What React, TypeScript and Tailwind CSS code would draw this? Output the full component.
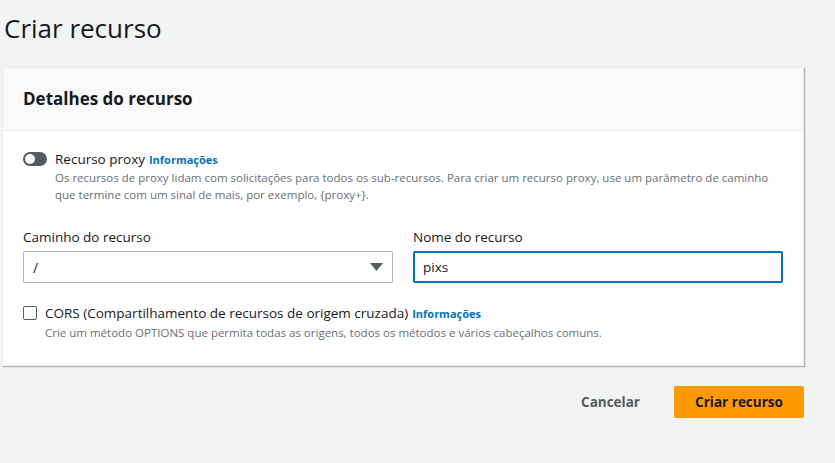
import { useState } from "react";

function Info() {
  return <span className="ml-1 text-[11px] font-bold text-[#0073bb]">Informações</span>;
}

export default function App() {
  const [proxy, setProxy] = useState(false);
  const [cors, setCors] = useState(false);
  const [name, setName] = useState("pixs");

  return (
    <div className="min-h-[463px] w-[835px] bg-[#f2f3f3] font-['Open_Sans',sans-serif] text-[#16191f]">
      <h1 className="pl-1 pt-[9px] text-[26px] leading-[38px] text-[#16191f]">Criar recurso</h1>

      <div className="ml-[2px] mt-[20px] w-[802px] border border-[#eaeded] bg-white shadow-[1px_1px_1px_0_rgba(0,28,36,0.3)]">
        <div className="flex h-[63px] items-center border-b border-[#eaeded] bg-[#fafafa] px-5">
          <h2 className="text-[17px] font-bold">Detalhes do recurso</h2>
        </div>

        <div className="px-5 pb-6 pt-5">
          <div className="flex gap-2">
            <button
              type="button"
              onClick={() => setProxy((v) => !v)}
              className={`mt-[1px] flex h-[14px] w-6 shrink-0 items-center rounded-full px-[2px] ${proxy ? "justify-end bg-[#0073bb]" : "bg-[#545b64]"}`}
            >
              <span className="h-[10px] w-[10px] rounded-full bg-white" />
            </button>
            <div>
              <div className="text-[13.5px] leading-[16px]">
                Recurso proxy
                <Info />
              </div>
              <p className="mt-[1px] text-[11.5px] leading-[17px] text-[#687078]">
                Os recursos de proxy lidam com solicitações para todos os sub-recursos. Para criar um recurso proxy, use um parâmetro de caminho
                <br />
                que termine com um sinal de mais, por exemplo, {"{proxy+}"}.
              </p>
            </div>
          </div>

          <div className="mt-[24px] grid grid-cols-2 gap-5">
            <div>
              <label className="block text-[13.5px] leading-[20px]">Caminho do recurso</label>
              <div className="mt-[4px] flex h-[32px] items-center justify-between rounded-[2px] border border-[#aab7b8] pl-[9px] pr-[9px] text-[14px]">
                <span>/</span>
                <svg width="13" height="8" viewBox="0 0 13 8">
                  <path d="M0 0h13L6.5 8z" fill="#545b64" />
                </svg>
              </div>
            </div>
            <div>
              <label className="block text-[13.5px] leading-[20px]">Nome do recurso</label>
              <input
                value={name}
                onChange={(e) => setName(e.target.value)}
                className="mt-[4px] h-[32px] w-full rounded-[2px] border-2 border-[#0073bb] px-[8px] text-[13.5px] outline-none"
              />
            </div>
          </div>

          <div className="mt-[22px] flex gap-2">
            <button
              type="button"
              onClick={() => setCors((v) => !v)}
              className={`mt-[1px] h-[14px] w-[14px] shrink-0 rounded-[2px] border border-[#545b64] ${cors ? "bg-[#0073bb]" : "bg-white"}`}
            />
            <div>
              <div className="text-[13.5px] leading-[16px]">
                CORS (Compartilhamento de recursos de origem cruzada)
                <Info />
              </div>
              <p className="mt-[2px] text-[11.5px] leading-[17px] text-[#687078]">
                Crie um método OPTIONS que permita todas as origens, todos os métodos e vários cabeçalhos comuns.
              </p>
            </div>
          </div>
        </div>
      </div>

      <div className="mt-[20px] flex w-[804px] items-center justify-end gap-[14px]">
        <button type="button" className="px-5 py-[6px] text-[13.5px] font-bold text-[#545b64]">
          Cancelar
        </button>
        <button type="button" className="h-8 w-[130px] rounded-[2px] bg-[#ff9900] text-[13.5px] font-bold text-[#16191f]">
          Criar recurso
        </button>
      </div>
    </div>
  );
}
